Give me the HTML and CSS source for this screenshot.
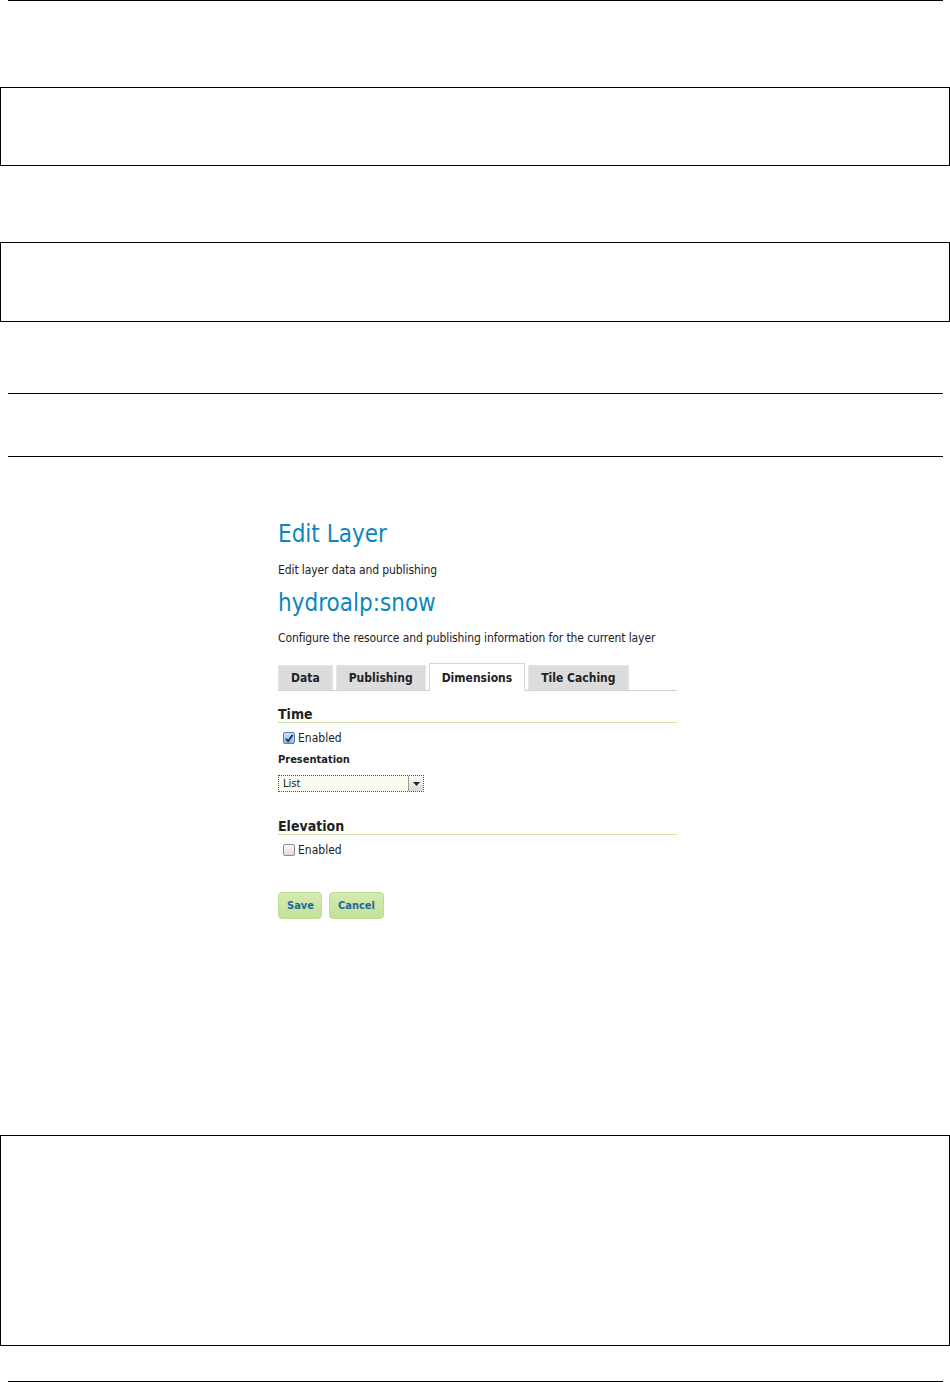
FILE: index.html
```html
<!DOCTYPE html>
<html lang="en">
<head>
    <meta charset="UTF-8">
    <meta name="viewport" content="width=device-width, initial-scale=1.0">
    <title>Edit Layer - Dimensions</title>
    <link rel="stylesheet" href="styles.css">
</head>
<body>
    <div class="rule rule-top"></div>
    <div class="box box-one"></div>
    <div class="box box-two"></div>
    <div class="rule rule-a"></div>
    <div class="rule rule-b"></div>

    <div class="shot">
        <h1 class="page-title">Edit Layer</h1>
        <p class="page-desc">Edit layer data and publishing</p>
        <h2 class="layer-name">hydroalp:snow</h2>
        <p class="layer-desc">Configure the resource and publishing information for the current layer</p>

        <ul class="tabs">
            <li class="tab">Data</li>
            <li class="tab">Publishing</li>
            <li class="tab active">Dimensions</li>
            <li class="tab">Tile Caching</li>
        </ul>

        <div class="dim">
            <h3 class="dim-title">Time</h3>
            <label class="check-row">
                <span class="check checked">
                    <svg width="11" height="11" viewBox="0 0 11 11"><path d="M2 5.5 L4.5 8.5 L9.5 1.5" fill="none" stroke="#1b3a66" stroke-width="2"/></svg>
                </span>
                Enabled
            </label>
            <div class="field-label">Presentation</div>
            <div class="select">
                <span class="select-text">List</span>
                <span class="select-arrow"><svg width="7" height="4" viewBox="0 0 7 4"><path d="M0 0 H7 L3.5 4 Z" fill="#222"/></svg></span>
            </div>
        </div>

        <div class="dim dim-elev">
            <h3 class="dim-title">Elevation</h3>
            <label class="check-row">
                <span class="check"></span>
                Enabled
            </label>
        </div>

        <div class="buttons">
            <button class="btn btn-save">Save</button>
            <button class="btn btn-cancel">Cancel</button>
        </div>
    </div>

    <div class="box box-three"></div>
    <div class="rule rule-end"></div>
</body>
</html>
```

FILE: styles.css
```css
body {
    margin: 0;
    padding: 0;
    background: #fff;
    font-family: "DejaVu Sans Condensed", "DejaVu Sans", sans-serif;
    color: #222;
}

/* document frame: rules and empty boxes */
.rule {
    height: 0;
    margin-left: 8px;
    width: 935px;
    border-top: 1px solid #000;
}

.box {
    box-sizing: border-box;
    width: 950px;
    border: 1px solid #000;
}

.box-one {
    margin-top: 86px;
    height: 79px;
}

.box-two {
    margin-top: 76px;
    height: 80px;
}

.rule-a { margin-top: 71px; }
.rule-b { margin-top: 62px; }

.box-three {
    margin-top: 62px;
    height: 211px;
}

.rule-end { margin-top: 35px; }

/* the screenshot of the edit page */
.shot {
    margin-left: 278px;
    width: 399px;
    padding-top: 62px;
    height: 616px;
    box-sizing: border-box;
}

.page-title,
.layer-name {
    margin: 0;
    font-weight: normal;
    font-size: 24px;
    line-height: 30px;
    color: #0c86c0;
}

.page-desc,
.layer-desc {
    margin: 0;
    font-size: 12px;
    line-height: 16px;
    color: #222;
    letter-spacing: -0.1px;
}

.page-desc { margin-top: 13px; }
.layer-name { margin-top: 10px; }
.layer-desc { margin-top: 12px; }

.tabs {
    list-style: none;
    margin: 18px 0 0;
    padding: 0;
    display: flex;
    gap: 3px;
    align-items: flex-end;
    border-bottom: 1px solid #d0d0d0;
    height: 26px;
}

.tab {
    box-sizing: border-box;
    height: 25px;
    padding: 0 12px;
    background: #dcdcdc;
    border: 1px solid #e6e6e6;
    border-bottom: none;
    font-weight: bold;
    font-size: 12px;
    line-height: 25px;
    color: #222;
}

.tab.active {
    height: 28px;
    line-height: 28px;
    background: #fff;
    border-color: #d6d6d6;
    margin-bottom: -1px;
    padding: 0 12px;
}

.dim {
    margin-top: 15px;
}

.dim-title {
    margin: 0;
    font-size: 14px;
    line-height: 16px;
    font-weight: bold;
    color: #222;
    border-bottom: 1px solid #cfe2a8;
}

.check-row {
    display: flex;
    align-items: center;
    gap: 3px;
    margin: 8px 0 0 5px;
    font-size: 12px;
    line-height: 14px;
}

.check {
    box-sizing: border-box;
    width: 12px;
    height: 12px;
    border: 1px solid #8e8e8e;
    border-radius: 2px;
    background: linear-gradient(#fafafa, #dcdcdc);
    display: flex;
    align-items: center;
    justify-content: center;
}

.check.checked {
    background: linear-gradient(#cfe3f7, #8fb8e6);
    border-color: #5d7fa8;
}

.field-label {
    margin-top: 8px;
    font-size: 11px;
    font-weight: bold;
    line-height: 14px;
}

.select {
    box-sizing: border-box;
    margin-top: 8px;
    width: 146px;
    height: 17px;
    border: 1px dotted #555;
    background: #fbfbef;
    display: flex;
    align-items: center;
    justify-content: space-between;
    font-size: 11px;
}

.select-text { padding-left: 4px; }

.select-arrow {
    box-sizing: border-box;
    width: 15px;
    height: 15px;
    border-left: 1px solid #999;
    background: linear-gradient(#fafafa, #d8d8d8);
    display: flex;
    align-items: center;
    justify-content: center;
}

.dim-elev {
    margin-top: 26px;
}

.buttons {
    display: flex;
    gap: 7px;
    margin-top: 35px;
}

.btn {
    box-sizing: border-box;
    height: 27px;
    padding: 0 8px;
    font-family: inherit;
    font-size: 11px;
    font-weight: bold;
    color: #1a6aa0;
    background: linear-gradient(#d4ebb0, #c4e09a);
    border: 1px solid #bddc94;
    border-radius: 4px;
}

.btn-save { width: 44px; }
.btn-cancel { width: 55px; }
```
